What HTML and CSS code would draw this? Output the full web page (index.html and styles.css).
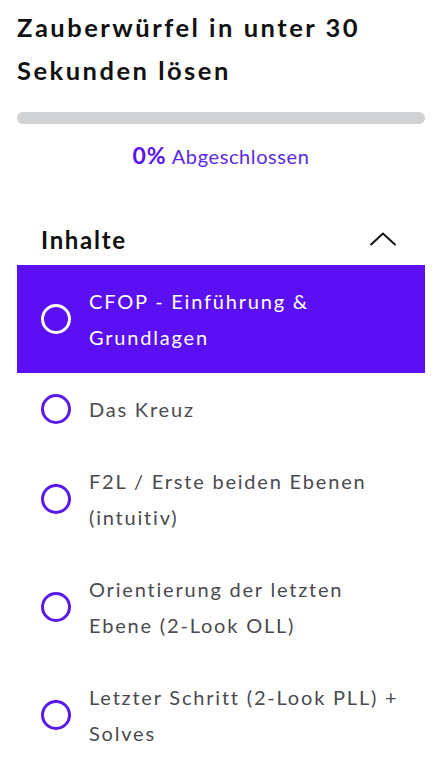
FILE: index.html
```html
<!DOCTYPE html>
<html lang="de">
<head>
<meta charset="utf-8">
<title>Zauberwürfel</title>
<link rel="stylesheet" href="styles.css">
</head>
<body>
<div class="page">
  <h1 class="title">Zauberwürfel in unter 30 Sekunden lösen</h1>
  <div class="progress"><div class="progress-fill" style="width:0%"></div></div>
  <p class="progress-label"><span class="pct">0%</span> Abgeschlossen</p>

  <section class="contents">
    <div class="contents-head">
      <h2>Inhalte</h2>
      <svg class="chevron" width="28" height="14" viewBox="0 0 28 14" aria-hidden="true">
        <path d="M1.5 13 L14 1.5 L26.5 13" fill="none" stroke="#111" stroke-width="2"/>
      </svg>
    </div>
    <ul class="lessons">
      <li class="lesson active"><span class="dot"></span><span class="name">CFOP - Einführung &amp; Grundlagen</span></li>
      <li class="lesson"><span class="dot"></span><span class="name">Das Kreuz</span></li>
      <li class="lesson"><span class="dot"></span><span class="name">F2L / Erste beiden Ebenen (intuitiv)</span></li>
      <li class="lesson"><span class="dot"></span><span class="name">Orientierung der letzten Ebene (2-Look OLL)</span></li>
      <li class="lesson"><span class="dot"></span><span class="name">Letzter Schritt (2-Look PLL) + Solves</span></li>
    </ul>
  </section>
</div>
</body>
</html>
```

FILE: styles.css
```css
* { box-sizing: border-box; }
html, body { margin: 0; padding: 0; background: #fff; }
body {
  font-family: "Lato", "Noto Sans", sans-serif;
  color: #1c1d1f;
  overflow: hidden;
}
.page {
  padding: 6px 18px 0 17px;
}
.title {
  margin: 0;
  font-size: 25.5px;
  line-height: 43px;
  font-weight: 700;
  letter-spacing: 2.5px;
  color: #111;
  padding-right: 40px;
}
.progress {
  margin-top: 20px;
  height: 12px;
  border-radius: 6px;
  background: #d1d2d4;
  overflow: hidden;
}
.progress-fill { height: 100%; background: #5a12ef; }
.progress-label {
  margin: 18px 0 0;
  text-align: center;
  font-size: 20px;
  line-height: 26px;
  color: #5a2ae0;
  letter-spacing: 0.6px;
}
.pct {
  font-weight: 700;
  font-size: 23px;
  letter-spacing: 1px;
  color: #5a12ef;
}
.contents { margin-top: 44px; }
.contents-head {
  display: flex;
  align-items: center;
  justify-content: space-between;
  padding: 0 28px 0 24px;
  height: 52px;
}
.contents-head h2 {
  margin: 0;
  font-size: 24px;
  font-weight: 700;
  letter-spacing: 1.7px;
  color: #111;
}
.lessons { list-style: none; margin: 0; padding: 0; }
.lesson {
  display: flex;
  align-items: center;
  gap: 18px;
  padding: 18px 14px 18px 24px;
  font-size: 20px;
  line-height: 36px;
  letter-spacing: 1.8px;
  color: #4a4a4f;
}
.lesson.active { background: #5a10f2; color: #fff; }
.dot {
  flex: none;
  width: 30px;
  height: 30px;
  border-radius: 50%;
  border: 3px solid #5a1ae6;
}
.lesson.active .dot { border-color: #fff; }
.name { flex: 1; }
```
